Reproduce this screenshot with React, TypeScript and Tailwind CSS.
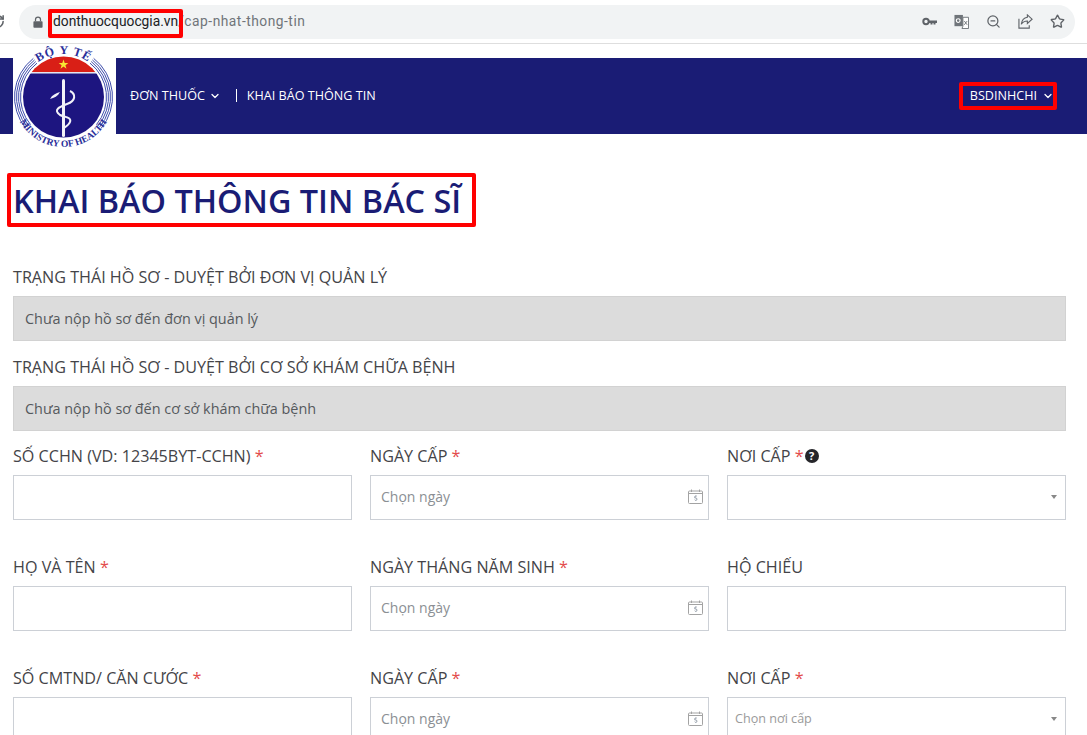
import { ChevronDown, RotateCw, Star, ZoomOut } from "lucide-react";

const outline = "absolute border-[4px] border-[#ff0000] rounded-[2px] pointer-events-none";

const CX = 50.5;
const CY = 53;

// one side band of the emblem, from 52deg above the horizontal to 40deg below
function bandArc(r: number, side: number) {
  const x1 = CX + side * r * Math.cos((52 * Math.PI) / 180);
  const y1 = CY - r * Math.sin((52 * Math.PI) / 180);
  const x2 = CX + side * r * Math.cos((40 * Math.PI) / 180);
  const y2 = CY + r * Math.sin((40 * Math.PI) / 180);
  return `M ${x1} ${y1} A ${r} ${r} 0 0 ${side < 0 ? 0 : 1} ${x2} ${y2}`;
}

function Logo() {
  return (
    <svg viewBox="0 0 104 110" className="absolute left-0 top-[-14px] w-[104px] h-[110px]">
      <defs>
        <path id="topArc" d="M 7.500 53 A 43 43 0 0 1 93.500 53" />
        <path id="bottomArc" d="M 0.500 53 A 50 50 0 0 0 100.500 53" />
        <clipPath id="disc">
          <circle cx={CX} cy={CY} r="40.500" />
        </clipPath>
      </defs>
      {[43, 45, 47, 49].map((r) => (
        <g key={r} fill="none" stroke="#3d4cab" strokeWidth="1">
          <path d={bandArc(r, -1)} />
          <path d={bandArc(r, 1)} />
        </g>
      ))}
      <g clipPath="url(#disc)">
        <rect x="5" y="10" width="92" height="18" fill="#d91f16" />
        <rect x="5" y="28" width="92" height="1.500" fill="#e4e4f0" />
        <rect x="5" y="29.500" width="92" height="66" fill="#1d1580" />
      </g>
      <polygon points="50.500,15.500 51.700,19 55.300,19 52.400,21.200 53.500,24.800 50.500,22.600 47.500,24.800 48.600,21.200 45.700,19 49.300,19" fill="#f7e733" />
      <rect x="49" y="35" width="3" height="58" rx="1.500" fill="#f2f2f8" />
      <path d="M 57 47 C 63 50 63 57 54 60 C 46 63 40 66 47 71 C 51 73 59 73 57 78 C 56 81 52 83 50 85" fill="none" stroke="#f2f2f8" strokeWidth="2" />
      <path d="M 37 55 C 39 51 43 49 47 48 C 45 52 41 54 37 55 Z" fill="#f2f2f8" />
      <text fontFamily="'Liberation Serif', serif" fontSize="12" fontWeight="700" letterSpacing="1" fill="#2a2f9a">
        <textPath href="#topArc" startOffset="50%" textAnchor="middle">BỘ Y TẾ</textPath>
      </text>
      <text fontFamily="'Liberation Serif', serif" fontSize="9.500" fontWeight="700" fill="#2a2f9a">
        <textPath href="#bottomArc" startOffset="50%" textAnchor="middle">MINISTRY OF HEALTH</textPath>
      </text>
    </svg>
  );
}

function LockIcon() {
  return (
    <svg viewBox="0 0 12 14" className="w-[10px] h-[12px] mr-[10px]">
      <path d="M3 6V4a3 3 0 0 1 6 0v2" fill="none" stroke="#5f6368" strokeWidth="1.500" />
      <rect x="0.500" y="6" width="11" height="8" rx="1" fill="#5f6368" />
    </svg>
  );
}

function KeyIcon() {
  return (
    <svg viewBox="0 0 15 15" className="w-[15px] h-[15px]">
      <circle cx="4" cy="7.500" r="2.700" fill="none" stroke="#5f6368" strokeWidth="2" />
      <path d="M6.500 6.500H15V9h-1.500v1.500h-2V9h-1v1.500h-2V9H6.500z" fill="#5f6368" />
    </svg>
  );
}

function ShareIcon() {
  return (
    <svg viewBox="0 0 16 16" className="w-[15px] h-[15px]" fill="none" stroke="#5f6368" strokeWidth="1.200">
      <path d="M1 5v10h11v-3" />
      <path d="M10 1l5 4.500L10 10V7.500C7 7.500 5 8.500 3.500 11 4 7 6.500 4 10 3.500z" />
    </svg>
  );
}

function TranslateIcon() {
  return (
    <svg viewBox="0 0 16 16" className="w-[15px] h-[15px]">
      <rect x="0.500" y="1" width="9" height="12" fill="#70757a" />
      <path d="M9.500 3.500h6v12h-7l1-2.500z" fill="#fff" stroke="#70757a" />
      <circle cx="4.500" cy="7" r="2" fill="none" stroke="#fff" strokeWidth="1.200" />
      <path d="M11 7.500l3 4M14 7.500l-3 4" stroke="#70757a" />
    </svg>
  );
}

function CalendarIcon() {
  return (
    <svg viewBox="0 0 15 15" className="w-[15px] h-[15px]" fill="none" stroke="#a3a3a3">
      <rect x="0.500" y="2" width="14" height="12.500" rx="1" />
      <path d="M0.500 4.500h14M3.500 0.500v2.500M11.500 0.500v2.500" />
      <path d="M8.800 7H7l-.2 2h1a1.200 1.200 0 1 1-1.100 1.700" strokeWidth="0.800" stroke="#7b8794" />
    </svg>
  );
}

function Req() {
  return <span className="text-[#e34b4b]"> *</span>;
}

function Field({ label, required, children }: { label: string; required?: boolean; children?: React.ReactNode }) {
  return (
    <div className="flex items-center h-6 mb-[7px] text-[16.15px] text-[#444448] whitespace-pre">
      {label}
      {required && <Req />}
      {children}
    </div>
  );
}

function TextInput() {
  return <div className="h-[45px] border border-[#ccd0d6] bg-white" />;
}

function DateInput() {
  return (
    <div className="h-[45px] border border-[#ccd0d6] bg-white flex items-center justify-between pl-[10px] pr-[5px] pb-[2px] text-sm text-[#8b8f94]">
      <span>Chọn ngày</span>
      <CalendarIcon />
    </div>
  );
}

function SelectInput({ placeholder }: { placeholder?: string }) {
  return (
    <div className="h-[45px] border border-[#ccd0d6] bg-white flex items-center justify-between pl-[7px] pr-[8px] pb-[1px] text-[12.6px] text-[#9a9a9a]">
      <span>{placeholder}</span>
      <span className="w-0 h-0 border-x-[3px] border-x-transparent border-t-[4px] border-t-[#888]" />
    </div>
  );
}

export default function App() {
  return (
    <div className="relative h-[735px] overflow-hidden bg-white font-['Open_Sans',sans-serif]">
      {/* browser bar */}
      <RotateCw size={15} strokeWidth={2.5} className="absolute left-[-10px] top-[14px] text-[#5f6368]" />
      <div className="h-[44px] border-b border-[#dedede] flex items-center pl-[19px] pr-[12px]">
        <div className="flex-1 h-[34px] rounded-full bg-[#f1f3f4] flex items-center pl-[14px] pr-[10px] font-['Roboto',sans-serif] text-[13.8px]">
          <LockIcon />
          <span className="text-[#202124]">donthuocquocgia.vn</span>
          <span className="text-[#70757a] tracking-[0.5px]">/cap-nhat-thong-tin</span>
          <div className="ml-auto flex items-center gap-[17px] text-[#5f6368]">
            <KeyIcon />
            <TranslateIcon />
            <ZoomOut size={15} />
            <ShareIcon />
            <Star size={15} strokeWidth={2.2} />
          </div>
        </div>
      </div>

      {/* navbar */}
      <div className="mt-[14px] h-[76px] bg-[#1a1c75] flex items-center text-white text-[12.6px]">
        <div className="relative ml-[13px] w-[103px] h-full bg-white shrink-0">
          <Logo />
        </div>
        <div className="ml-[14px] flex items-center">
          <span>ĐƠN THUỐC</span>
          <ChevronDown size={12} strokeWidth={2.5} className="ml-[4px]" />
        </div>
        <div className="ml-[15px] mb-[1px] pl-[10px] border-l border-white leading-[13px]">KHAI BÁO THÔNG TIN</div>
        <div className="ml-auto mr-[33px] flex items-center">
          <span>BSDINHCHI</span>
          <ChevronDown size={12} strokeWidth={2.5} className="ml-[5px]" />
        </div>
      </div>

      {/* form */}
      <div className="w-[1066px] pl-[13px]">
        <h1 className="mt-[44px] h-[44px] text-[32.4px] leading-[44px] font-semibold text-[#1a1c75] whitespace-nowrap">KHAI BÁO THÔNG TIN BÁC SĨ</h1>

        <div className="mt-[43px] h-6 mb-[7px] text-[16.15px] text-[#444448]">TRẠNG THÁI HỒ SƠ - DUYỆT BỞI ĐƠN VỊ QUẢN LÝ</div>
        <div className="h-[45px] bg-[#dcdcdc] border border-[#d2d2d2] flex items-center pl-[11px] text-[14.4px] text-[#55595c]">Chưa nộp hồ sơ đến đơn vị quản lý</div>

        <div className="mt-[14px] h-6 mb-[7px] text-[16.15px] text-[#444448]">TRẠNG THÁI HỒ SƠ - DUYỆT BỞI CƠ SỞ KHÁM CHỮA BỆNH</div>
        <div className="h-[45px] bg-[#dcdcdc] border border-[#d2d2d2] flex items-center pl-[11px] text-[14.4px] text-[#55595c]">Chưa nộp hồ sơ đến cơ sở khám chữa bệnh</div>

        <div className="mt-[13px] grid grid-cols-3 gap-x-[18px] gap-y-[35px]">
          <div>
            <Field label="SỐ CCHN (VD: 12345BYT-CCHN)" required />
            <TextInput />
          </div>
          <div>
            <Field label="NGÀY CẤP" required />
            <DateInput />
          </div>
          <div>
            <Field label="NƠI CẤP" required>
              <span className="ml-[1px] w-[14px] h-[14px] rounded-full bg-[#26262a] text-white text-[11px] leading-[14px] font-bold text-center">?</span>
            </Field>
            <SelectInput />
          </div>
          <div>
            <Field label="HỌ VÀ TÊN" required />
            <TextInput />
          </div>
          <div>
            <Field label="NGÀY THÁNG NĂM SINH" required />
            <DateInput />
          </div>
          <div>
            <Field label="HỘ CHIẾU" />
            <TextInput />
          </div>
          <div>
            <Field label="SỐ CMTND/ CĂN CƯỚC" required />
            <TextInput />
          </div>
          <div>
            <Field label="NGÀY CẤP" required />
            <DateInput />
          </div>
          <div>
            <Field label="NƠI CẤP" required />
            <SelectInput placeholder="Chọn nơi cấp" />
          </div>
        </div>
      </div>

      {/* red annotation boxes */}
      <div className={`${outline} left-[48px] top-[9px] w-[135px] h-[29px]`} />
      <div className={`${outline} left-[959px] top-[82px] w-[98px] h-[28px]`} />
      <div className={`${outline} left-[7px] top-[173px] w-[469px] h-[54px]`} />
    </div>
  );
}
